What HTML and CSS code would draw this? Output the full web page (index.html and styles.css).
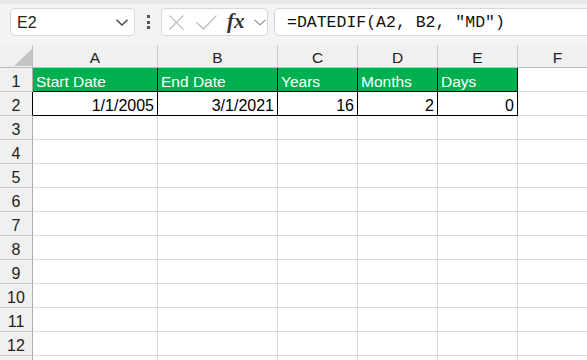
FILE: index.html
```html
<!DOCTYPE html>
<html lang="en">
<head>
  <meta charset="UTF-8" />
  <title>DATEDIF - Book1</title>
  <link rel="stylesheet" href="styles.css">
</head>
<body>

  <div class="toolbar">
    <div class="namebox">
      <span>E2</span>
      <svg width="12" height="7" viewBox="0 0 12 7"><path d="M0.5 0.8 L6 6 L11.5 0.8" fill="none" stroke="#444" stroke-width="1.3"/></svg>
    </div>
    <div class="grip"><i></i><i></i><i></i></div>
    <div class="fxbox">
      <svg class="cancel" width="15" height="15" viewBox="0 0 15 15"><path d="M0.5 0.5 L14.5 14.5 M14.5 0.5 L0.5 14.5" stroke="#bdbdbd" stroke-width="1.3"/></svg>
      <svg class="enter" width="21" height="15" viewBox="0 0 21 15"><path d="M0.5 7.5 L7.5 14 L20.5 0.5" fill="none" stroke="#bdbdbd" stroke-width="1.3"/></svg>
      <span class="fx">fx</span>
      <svg class="more" width="12" height="7" viewBox="0 0 12 7"><path d="M0.5 0.8 L6 6 L11.5 0.8" fill="none" stroke="#999" stroke-width="1.2"/></svg>
    </div>
    <div class="formula">=DATEDIF(A2, B2, "MD")</div>
  </div>

  <div class="sheet">
    <!-- column headers -->
    <div class="c corner"><svg width="18" height="17" viewBox="0 0 18 17"><polygon points="18,0 18,17 0,17" fill="#c3c3c3"/></svg></div>
    <div class="c ch">A</div><div class="c ch">B</div><div class="c ch">C</div><div class="c ch">D</div><div class="c ch">E</div><div class="c ch">F</div>

    <!-- row 1 -->
    <div class="c rh">1</div>
    <div class="c hd">Start Date</div><div class="c hd">End Date</div><div class="c hd">Years</div><div class="c hd">Months</div><div class="c hd">Days</div><div class="c"></div>

    <!-- row 2 -->
    <div class="c rh rh-edge">2</div>
    <div class="c num">1/1/2005</div><div class="c num">3/1/2021</div><div class="c num">16</div><div class="c num">2</div><div class="c num">0</div><div class="c"></div>

    <div class="c rh">3</div><div class="c"></div><div class="c"></div><div class="c"></div><div class="c"></div><div class="c"></div><div class="c"></div>
    <div class="c rh">4</div><div class="c"></div><div class="c"></div><div class="c"></div><div class="c"></div><div class="c"></div><div class="c"></div>
    <div class="c rh">5</div><div class="c"></div><div class="c"></div><div class="c"></div><div class="c"></div><div class="c"></div><div class="c"></div>
    <div class="c rh">6</div><div class="c"></div><div class="c"></div><div class="c"></div><div class="c"></div><div class="c"></div><div class="c"></div>
    <div class="c rh">7</div><div class="c"></div><div class="c"></div><div class="c"></div><div class="c"></div><div class="c"></div><div class="c"></div>
    <div class="c rh">8</div><div class="c"></div><div class="c"></div><div class="c"></div><div class="c"></div><div class="c"></div><div class="c"></div>
    <div class="c rh">9</div><div class="c"></div><div class="c"></div><div class="c"></div><div class="c"></div><div class="c"></div><div class="c"></div>
    <div class="c rh">10</div><div class="c"></div><div class="c"></div><div class="c"></div><div class="c"></div><div class="c"></div><div class="c"></div>
    <div class="c rh">11</div><div class="c"></div><div class="c"></div><div class="c"></div><div class="c"></div><div class="c"></div><div class="c"></div>
    <div class="c rh">12</div><div class="c"></div><div class="c"></div><div class="c"></div><div class="c"></div><div class="c"></div><div class="c"></div>
    <!-- row 13 only peeks in at the bottom edge -->
    <div class="c rh"></div><div class="c"></div><div class="c"></div><div class="c"></div><div class="c"></div><div class="c"></div><div class="c"></div>
  </div>

</body>
</html>
```

FILE: styles.css
```css
html, body {
  margin: 0;
  height: 100%;
  overflow: hidden;
  background: #fff;
  font-family: "Liberation Sans", Arial, sans-serif;
}

/* === FORMULA BAR === */
.toolbar {
  height: 45px;
  box-sizing: border-box;
  border-top: 4px solid #e9e9e9;
  background: #f3f3f3;
  display: flex;
  align-items: flex-start;
  padding: 4px 0 0 10px;
  overflow: hidden;
}

.namebox,
.fxbox,
.formula {
  height: 28px;
  box-sizing: border-box;
  background: #fff;
  border: 1px solid #d6d6d6;
  border-radius: 5px;
}

.namebox {
  width: 125px;
  display: flex;
  align-items: center;
  justify-content: space-between;
  padding: 1px 6px 0 6px;
  font-size: 16px;
  color: #222;
}

.grip {
  width: 26px;
  height: 28px;
  display: flex;
  flex-direction: column;
  align-items: center;
  justify-content: center;
  gap: 2.5px;
}

.grip i {
  width: 3px;
  height: 3px;
  background: #555;
}

.fxbox {
  width: 107px;
  display: flex;
  align-items: center;
  padding: 0 1px 0 7px;
}

.fxbox .cancel { margin-right: 12px; }
.fxbox .enter { margin-right: 10px; }
.fxbox .more { margin-left: auto; }

.fx {
  font-family: "Liberation Serif", "Times New Roman", serif;
  font-style: italic;
  font-weight: bold;
  font-size: 21px;
  color: #333;
  line-height: 1;
  margin-top: -2px;
}

.formula {
  flex: 1;
  margin-left: 6px;
  margin-right: -10px;
  padding: 1px 0 0 12px;
  font-family: "Liberation Mono", "DejaVu Sans Mono", monospace;
  font-size: 16.5px;
  line-height: 26px;
  color: #111;
  white-space: nowrap;
}

/* === GRID === */
.sheet {
  display: grid;
  grid-template-columns: 33px 125px 120px 80px 80px 80px 80px;
  grid-template-rows: 23px;
  grid-auto-rows: 24px;
}

.c {
  box-sizing: border-box;
  border-right: 1px solid #dcdcdc;
  border-bottom: 1px solid #dcdcdc;
  font-size: 15.5px;
  line-height: 21px;
  padding: 3px 3px 0 3px;
  white-space: nowrap;
  overflow: hidden;
  color: #000;
}

.corner {
  background: #f0f0f0;
  border-right-color: #bcbcbc;
  border-bottom-color: #bcbcbc;
  padding: 0 0 1px 0;
  display: flex;
  justify-content: flex-end;
  align-items: flex-end;
}

.ch {
  background: #f0f0f0;
  border-right-color: #c8c8c8;
  border-bottom-color: #bcbcbc;
  text-align: center;
  padding-top: 2px;
  color: #222;
}

.rh {
  background: #f0f0f0;
  border-right-color: #aeaeae;
  border-bottom-color: #cdcdcd;
  text-align: center;
  padding: 3px 0 0 0;
  font-size: 16px;
  color: #222;
}

.rh-edge {
  border-right-color: #000;
}

.hd {
  background: #00b050;
  color: #fff;
  border-right-color: #000;
  border-bottom-color: #000;
}

.num {
  text-align: right;
  font-size: 16px;
  border-right-color: #000;
  border-bottom-color: #000;
}
```
